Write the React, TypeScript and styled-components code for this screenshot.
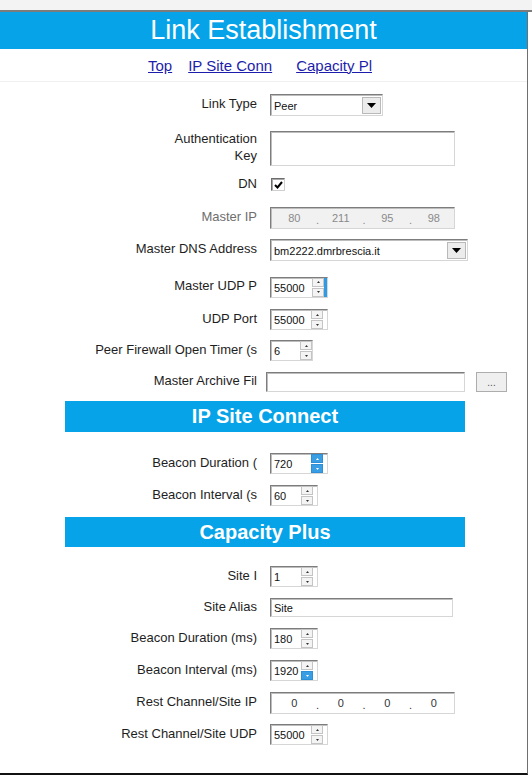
import React from 'react';
import styled, { createGlobalStyle } from 'styled-components';

const GlobalStyle = createGlobalStyle`
  html, body { margin: 0; padding: 0; background: #ffffff; }
  body { font-family: "Liberation Sans", Arial, sans-serif; color: #1e1e1e; }
`;

const Page = styled.div`
  width: 532px;
  height: 778px;
  display: flex;
  flex-direction: column;
  background: #fff;
  overflow: hidden;
`;

const TopStrip = styled.div`
  flex: 0 0 10px;
  background: #f3f3f3;
  border-bottom: 2px solid #7c7c7c;
`;

const Frame = styled.div`
  width: 528px;
  height: 763px;
  box-sizing: border-box;
  border-right: 1px solid #6f6f6f;
  border-bottom: 2px solid #111;
  display: flex;
  flex-direction: column;
`;

const Header = styled.div`
  height: 37px;
  background: #06a3e8;
  color: #fff;
  font-size: 27px;
  line-height: 37px;
  text-align: center;
`;

const Nav = styled.div`
  height: 32px;
  border-bottom: 1px solid #f0f0f0;
  display: flex;
  align-items: center;
  padding-left: 148px;
`;

const NavLink = styled.a<{ $ml?: number }>`
  font-size: 15px;
  color: #1d1dab;
  text-decoration: underline;
  margin-left: ${(p) => p.$ml ?? 0}px;
  cursor: pointer;
`;

const Row = styled.div<{ $mt: number; $h: number }>`
  display: flex;
  align-items: center;
  margin-top: ${(p) => p.$mt}px;
  height: ${(p) => p.$h}px;
`;

const Label = styled.div<{ $disabled?: boolean }>`
  flex: 0 0 257px;
  margin-right: 13px;
  padding-bottom: 3px;
  text-align: right;
  font-size: 13px;
  line-height: 17px;
  color: ${(p) => (p.$disabled ? '#6e6e6e' : '#1e1e1e')};
  white-space: nowrap;
`;

const Inset = styled.div<{ $w: number; $h: number; $bg?: string; $shift?: number }>`
  box-sizing: border-box;
  width: ${(p) => p.$w}px;
  height: ${(p) => p.$h}px;
  margin-left: ${(p) => p.$shift ?? 0}px;
  background: ${(p) => p.$bg ?? '#fff'};
  border: 1px solid;
  border-color: #7d7d7d #d6d6d6 #d6d6d6 #7d7d7d;
  box-shadow: inset 1px 1px 0 #bdbdbd;
  display: flex;
  align-items: center;
  font-size: 11px;
  color: #111;
`;

const Value = styled.span`
  padding-left: 3px;
  flex: 1 1 auto;
  padding-top: 1px;
`;

const ArrowBox = styled.div`
  flex: 0 0 19px;
  height: 17px;
  margin-right: 1px;
  box-sizing: border-box;
  background: #ececec;
  border: 1px solid #b9b9b9;
  display: flex;
  align-items: center;
  justify-content: center;
`;

const Check = styled.div`
  box-sizing: border-box;
  width: 14px;
  height: 13px;
  margin-left: 1px;
  border: 1px solid;
  border-color: #6d6d6d #cfcfcf #cfcfcf #6d6d6d;
  box-shadow: inset 1px 1px 0 #a8a8a8;
  background: #fff;
  display: flex;
  align-items: center;
  justify-content: center;
`;

const IpGrid = styled.div<{ $color: string }>`
  flex: 1 1 auto;
  display: grid;
  grid-template-columns: 1fr 6px 1fr 6px 1fr 6px 1fr;
  padding-left: 3px;
  font-size: 11px;
  color: ${(p) => p.$color};
  text-align: center;
`;

const Dot = styled.span`
  position: relative;
  top: 2px;
`;

const SpinButtons = styled.div<{ $mr: number }>`
  flex: 0 0 12px;
  height: 19px;
  margin-right: ${(p) => p.$mr}px;
  display: flex;
  flex-direction: column;
  gap: 1px;
`;

const SpinBtn = styled.div<{ $hl?: boolean }>`
  flex: 1 1 0;
  box-sizing: border-box;
  border: 1px solid ${(p) => (p.$hl ? '#2d8fd6' : '#c4c4c4')};
  background: ${(p) => (p.$hl ? '#3a9ee4' : '#f4f4f4')};
  display: flex;
  align-items: center;
  justify-content: center;
`;

const HlBar = styled.div`
  flex: 0 0 3px;
  align-self: stretch;
  background: #2f9be3;
`;

const Band = styled.div<{ $mt: number; $h: number }>`
  margin-top: ${(p) => p.$mt}px;
  margin-left: 65px;
  width: 400px;
  height: ${(p) => p.$h}px;
  background: #06a3e8;
  color: #fff;
  font-size: 20px;
  font-weight: bold;
  display: flex;
  align-items: center;
  justify-content: center;
`;

const BrowseButton = styled.div`
  box-sizing: border-box;
  width: 31px;
  height: 20px;
  margin-left: 11px;
  background: #efefef;
  border: 1px solid #adadad;
  font-size: 10px;
  color: #555;
  display: flex;
  align-items: flex-end;
  justify-content: center;
  padding-bottom: 3px;
`;

const DownArrow = () => (
  <svg width="9" height="5" viewBox="0 0 9 5">
    <polygon points="0,0 9,0 4.5,5" fill="#000" />
  </svg>
);

const Tiny = ({ up, light }: { up?: boolean; light?: boolean }) => (
  <svg width="3" height="2" viewBox="0 0 3 2">
    <polygon points={up ? '0,2 3,2 1.5,0' : '0,0 3,0 1.5,2'} fill={light ? '#fff' : '#333'} />
  </svg>
);

type Hl = 'none' | 'bar' | 'fill' | 'bottom';

const Spin = ({ value, w, hl = 'none', mr = 4 }: { value: string; w: number; hl?: Hl; mr?: number }) => (
  <Inset $w={w} $h={21}>
    <Value>{value}</Value>
    <SpinButtons $mr={hl === 'bar' ? 0 : mr}>
      <SpinBtn $hl={hl === 'fill'}>
        <Tiny up light={hl === 'fill'} />
      </SpinBtn>
      <SpinBtn $hl={hl === 'fill' || hl === 'bottom'}>
        <Tiny light={hl === 'fill' || hl === 'bottom'} />
      </SpinBtn>
    </SpinButtons>
    {hl === 'bar' && <HlBar />}
  </Inset>
);

const Select = ({ value, w }: { value: string; w: number }) => (
  <Inset $w={w} $h={22}>
    <Value>{value}</Value>
    <ArrowBox>
      <DownArrow />
    </ArrowBox>
  </Inset>
);

const IpField = ({ parts, disabled }: { parts: string[]; disabled?: boolean }) => (
  <Inset $w={185} $h={22} $bg={disabled ? '#f1f1f1' : '#fff'}>
    <IpGrid $color={disabled ? '#8a8a8a' : '#333'}>
      <span>{parts[0]}</span>
      <Dot>.</Dot>
      <span>{parts[1]}</span>
      <Dot>.</Dot>
      <span>{parts[2]}</span>
      <Dot>.</Dot>
      <span>{parts[3]}</span>
    </IpGrid>
  </Inset>
);

export default function App() {
  return (
    <Page>
      <GlobalStyle />
      <TopStrip />
      <Frame>
        <Header>Link Establishment</Header>
        <Nav>
          <NavLink>Top</NavLink>
          <NavLink $ml={16}>IP Site Conn</NavLink>
          <NavLink $ml={24}>Capacity Pl</NavLink>
        </Nav>

        <Row $mt={12} $h={22}>
          <Label>Link Type</Label>
          <Select value="Peer" w={113} />
        </Row>
        <Row $mt={15} $h={35}>
          <Label>
            Authentication
            <br />
            Key
          </Label>
          <Inset $w={185} $h={35} />
        </Row>
        <Row $mt={12} $h={13}>
          <Label>DN</Label>
          <Check>
            <svg width="9" height="8" viewBox="0 0 9 8">
              <polyline points="1,4 3.5,6.5 8,1" fill="none" stroke="#000" strokeWidth="2" />
            </svg>
          </Check>
        </Row>
        <Row $mt={16} $h={22}>
          <Label $disabled>Master IP</Label>
          <IpField parts={['80', '211', '95', '98']} disabled />
        </Row>
        <Row $mt={10} $h={22}>
          <Label>Master DNS Address</Label>
          <Select value="bm2222.dmrbrescia.it" w={198} />
        </Row>
        <Row $mt={15} $h={22}>
          <Label>Master UDP P</Label>
          <Spin value="55000" w={58} hl="bar" />
        </Row>
        <Row $mt={11} $h={21}>
          <Label>UDP Port</Label>
          <Spin value="55000" w={58} />
        </Row>
        <Row $mt={10} $h={21}>
          <Label>Peer Firewall Open Timer (s</Label>
          <Spin value="6" w={43} mr={0} />
        </Row>
        <Row $mt={11} $h={20}>
          <Label>Master Archive Fil</Label>
          <Inset $w={199} $h={20} $shift={-4} />
          <BrowseButton>...</BrowseButton>
        </Row>

        <Band $mt={9} $h={31}>IP Site Connect</Band>

        <Row $mt={21} $h={21}>
          <Label>Beacon Duration (</Label>
          <Spin value="720" w={58} hl="fill" />
        </Row>
        <Row $mt={11} $h={21}>
          <Label>Beacon Interval (s</Label>
          <Spin value="60" w={48} />
        </Row>

        <Band $mt={11} $h={30}>Capacity Plus</Band>

        <Row $mt={19} $h={21}>
          <Label>Site I</Label>
          <Spin value="1" w={48} />
        </Row>
        <Row $mt={11} $h={19}>
          <Label>Site Alias</Label>
          <Inset $w={183} $h={19}>
            <Value>Site</Value>
          </Inset>
        </Row>
        <Row $mt={11} $h={21}>
          <Label>Beacon Duration (ms)</Label>
          <Spin value="180" w={48} />
        </Row>
        <Row $mt={11} $h={21}>
          <Label>Beacon Interval (ms)</Label>
          <Spin value="1920" w={48} hl="bottom" />
        </Row>
        <Row $mt={11} $h={21}>
          <Label>Rest Channel/Site IP</Label>
          <IpField parts={['0', '0', '0', '0']} />
        </Row>
        <Row $mt={11} $h={21}>
          <Label>Rest Channel/Site UDP</Label>
          <Spin value="55000" w={58} />
        </Row>
      </Frame>
    </Page>
  );
}
